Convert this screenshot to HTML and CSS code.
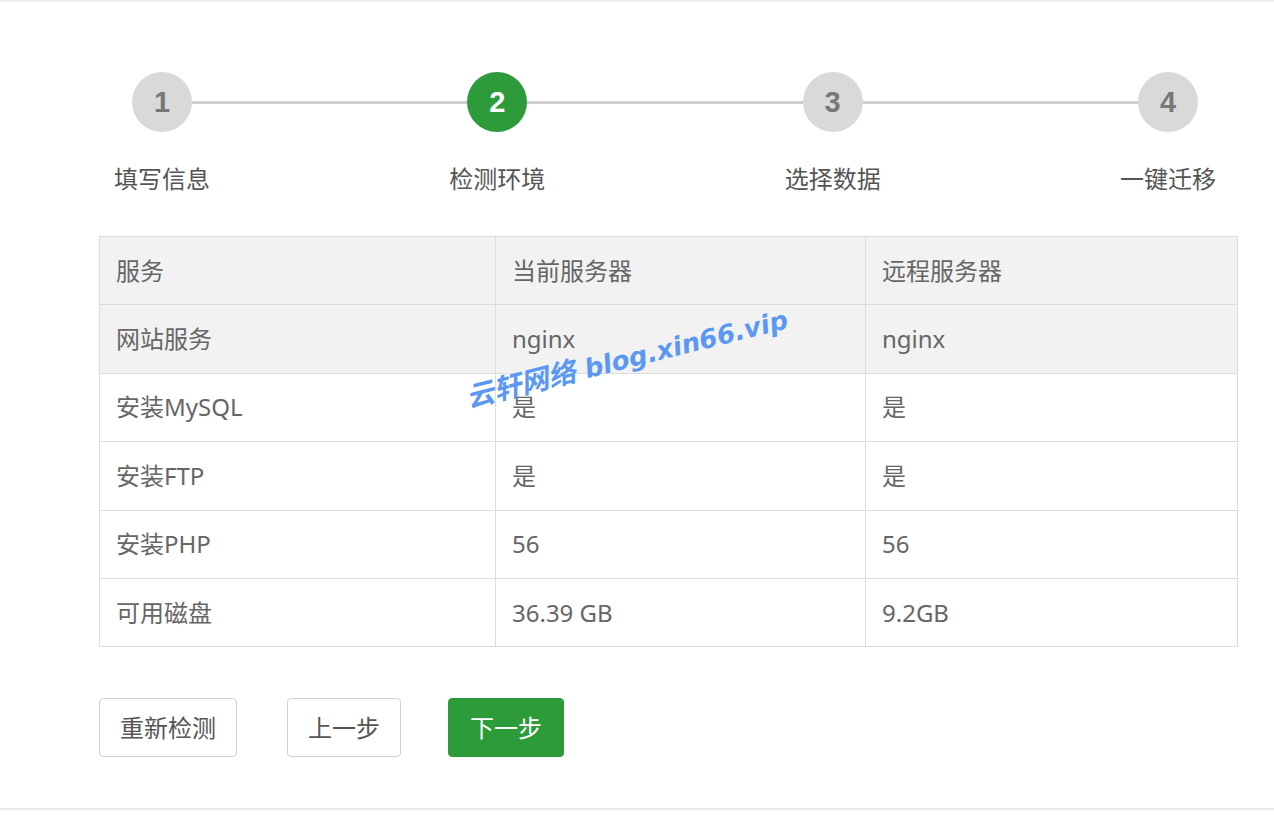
FILE: index.html
```html
<!DOCTYPE html>
<html lang="zh-CN">
<head>
<meta charset="utf-8">
<title>一键迁移 - 检测环境</title>
<link rel="stylesheet" href="styles.css">
</head>
<body>
<div class="panel">
  <div class="wizard">
    <div class="step-track">
      <span class="step-dot">1</span>
      <span class="step-line"></span>
      <span class="step-dot is-active">2</span>
      <span class="step-line"></span>
      <span class="step-dot">3</span>
      <span class="step-line"></span>
      <span class="step-dot">4</span>
    </div>
    <div class="step-labels">
      <span class="step-label">填写信息</span>
      <span class="step-label">检测环境</span>
      <span class="step-label">选择数据</span>
      <span class="step-label">一键迁移</span>
    </div>

    <table class="env-table">
      <colgroup>
        <col class="col-name">
        <col class="col-local">
        <col class="col-remote">
      </colgroup>
      <thead>
        <tr><th>服务</th><th>当前服务器</th><th>远程服务器</th></tr>
      </thead>
      <tbody>
        <tr class="is-hover"><td>网站服务</td><td>nginx</td><td>nginx</td></tr>
        <tr><td>安装MySQL</td><td>是</td><td>是</td></tr>
        <tr><td>安装FTP</td><td>是</td><td>是</td></tr>
        <tr><td>安装PHP</td><td>56</td><td>56</td></tr>
        <tr><td>可用磁盘</td><td>36.39 GB</td><td>9.2GB</td></tr>
      </tbody>
    </table>

    <div class="actions">
      <button class="btn btn-wide" type="button">重新检测</button>
      <button class="btn" type="button">上一步</button>
      <button class="btn btn-primary" type="button">下一步</button>
    </div>
  </div>
  <div class="watermark">云轩网络 <b>blog.xin66.vip</b></div>
</div>
</body>
</html>
```

FILE: styles.css
```css
* {
  box-sizing: border-box;
}

html, body {
  margin: 0;
  padding: 0;
  background: #fff;
}

body {
  font-family: "Noto Sans", "Noto Sans CJK SC", sans-serif;
  color: #666;
}

.panel {
  position: relative;
  height: 818px;
  border-top: 2px solid #ececec;
}

.wizard {
  padding: 70px 37px 51px 99px;
  border-bottom: 2px solid #ebebeb;
}

/* progress track: numbered dots joined by lines */
.step-track {
  display: flex;
  align-items: center;
  margin: 0 39px 0 33px;
}

.step-dot {
  flex: none;
  width: 60px;
  height: 60px;
  border-radius: 50%;
  background: #d9d9d9;
  color: #777;
  font-family: "Liberation Sans", Arial, sans-serif;
  font-weight: bold;
  font-size: 29px;
  line-height: 60px;
  text-align: center;
}

.step-dot.is-active {
  background: #2e9b3b;
  color: #fff;
}

.step-line {
  flex: 1;
  height: 3px;
  background: #cfcfcf;
}

.step-labels {
  display: flex;
  justify-content: space-between;
  margin: 30px 21px 0 15px;
}

.step-label {
  width: 96px;
  font-size: 24px;
  line-height: 34px;
  color: #555;
  text-align: center;
}

/* environment comparison table */
.env-table {
  width: 1138px;
  margin-top: 40px;
  border-collapse: collapse;
  table-layout: fixed;
  font-size: 24px;
}

.col-name { width: 396px; }
.col-local { width: 370px; }
.col-remote { width: 372px; }

.env-table th,
.env-table td {
  height: 68.4px;
  padding: 0 16px;
  border: 1px solid #dcdcdc;
  text-align: left;
  font-weight: normal;
  color: #666;
  line-height: 34px;
}

.env-table thead th,
.env-table tr.is-hover td {
  background: #f2f2f2;
}

/* footer buttons */
.actions {
  display: flex;
  gap: 50px;
  margin-top: 51px;
}

.btn {
  height: 59px;
  padding: 0 20px;
  border: 1px solid #cfcfcf;
  border-radius: 4px;
  background: #fff;
  color: #555;
  font-family: "Noto Sans", "Noto Sans CJK SC", sans-serif;
  font-size: 24px;
  line-height: 57px;
  cursor: pointer;
}

.btn-wide {
  width: 138px;
}

.btn-primary {
  width: 116px;
  margin-left: -3px;
  background: #2e9b3b;
  border-color: #2e9b3b;
  color: #fff;
}

/* blog stamp laid over the table */
.watermark {
  position: absolute;
  left: 466px;
  top: 374px;
  transform: rotate(-14deg);
  transform-origin: left center;
  color: #5b98f2;
  font-family: "DejaVu Sans", "Noto Sans CJK SC", sans-serif;
  font-weight: bold;
  font-style: italic;
  font-size: 28px;
  white-space: nowrap;
}

.watermark b {
  font-size: 26px;
  letter-spacing: 0;
}
```
